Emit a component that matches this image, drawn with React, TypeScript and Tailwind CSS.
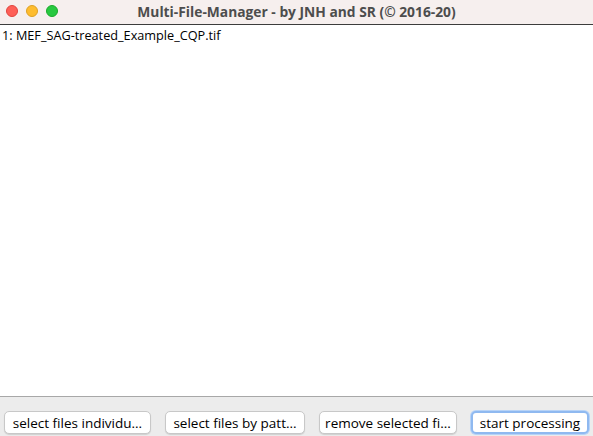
export default function App() {
  const buttons = [
    { label: "select files individu...", w: "w-[147px]", focus: false },
    { label: "select files by patt...", w: "w-[140px]", focus: false },
    { label: "remove selected fi...", w: "w-[138px]", focus: false },
    { label: "start processing", w: "w-[118px]", focus: true },
  ];

  return (
    <div className="w-[593px] h-[436px] flex flex-col bg-white overflow-hidden font-['Open_Sans',sans-serif]">
      {/* title bar */}
      <div className="relative h-[25px] shrink-0 bg-[#f6efee] border-b border-[#3c3c3c] flex items-center justify-center">
        <div className="absolute left-[6px] top-[5px] flex gap-[8px]">
          <span className="w-[12px] h-[12px] rounded-full bg-[#fe5f57] border border-[#e1443e]" />
          <span className="w-[12px] h-[12px] rounded-full bg-[#febc2e] border border-[#dea123]" />
          <span className="w-[12px] h-[12px] rounded-full bg-[#28c840] border border-[#1aab29]" />
        </div>
        <span className="text-[13.8px] font-bold text-[#4d4d4d]">
          Multi-File-Manager - by JNH and SR (© 2016-20)
        </span>
      </div>

      {/* file list */}
      <div className="flex-1 bg-white px-[2px] pt-[2px]">
        <div className="text-[12.7px] leading-[17px] text-black">1: MEF_SAG-treated_Example_CQP.tif</div>
      </div>

      {/* button bar */}
      <div className="h-[40px] shrink-0 bg-[#ececec] border-t border-[#a8a8a8] flex items-end justify-between pl-[4px] pr-[4px] pb-[2px]">
        {buttons.map((b) => (
          <button
            key={b.label}
            className={`${b.w} h-[23px] rounded-[5px] bg-white text-[13.5px] leading-[16px] pt-[1px] text-black flex items-center justify-center ${
              b.focus
                ? "border-[2px] border-[#8fb9f0] shadow-[0_0_0_1px_#b7d3f7]"
                : "border border-[#c8c8c8] shadow-[0_1px_1px_rgba(0,0,0,0.12)]"
            }`}
          >
            {b.label}
          </button>
        ))}
      </div>
    </div>
  );
}
